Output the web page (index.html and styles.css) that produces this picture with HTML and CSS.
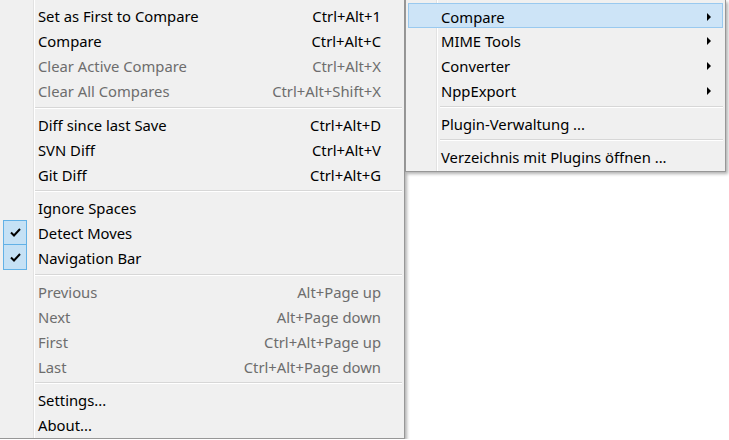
FILE: index.html
```html
<!DOCTYPE html>
<html lang="en">
<head>
  <meta charset="UTF-8">
  <title>Compare menu</title>
  <link rel="stylesheet" href="styles.css">
</head>
<body>
  <div class="menus">
    <div class="menu main-menu">
      <div class="item"><span class="gutter"></span><span class="label">Set as First to Compare</span><span class="key">Ctrl+Alt+1</span></div>
      <div class="item"><span class="gutter"></span><span class="label">Compare</span><span class="key">Ctrl+Alt+C</span></div>
      <div class="item disabled"><span class="gutter"></span><span class="label">Clear Active Compare</span><span class="key">Ctrl+Alt+X</span></div>
      <div class="item disabled"><span class="gutter"></span><span class="label">Clear All Compares</span><span class="key">Ctrl+Alt+Shift+X</span></div>
      <div class="sep wide"></div>
      <div class="item"><span class="gutter"></span><span class="label">Diff since last Save</span><span class="key">Ctrl+Alt+D</span></div>
      <div class="item"><span class="gutter"></span><span class="label">SVN Diff</span><span class="key">Ctrl+Alt+V</span></div>
      <div class="item"><span class="gutter"></span><span class="label">Git Diff</span><span class="key">Ctrl+Alt+G</span></div>
      <div class="sep"></div>
      <div class="item"><span class="gutter"></span><span class="label">Ignore Spaces</span></div>
      <div class="item checked">
        <span class="gutter"><span class="check"><svg width="11" height="9" viewBox="0 0 11 9"><path d="M1 4.5 L4 7.5 L10 1" fill="none" stroke="#000" stroke-width="2"/></svg></span></span>
        <span class="label">Detect Moves</span>
      </div>
      <div class="item checked">
        <span class="gutter"><span class="check"><svg width="11" height="9" viewBox="0 0 11 9"><path d="M1 4.5 L4 7.5 L10 1" fill="none" stroke="#000" stroke-width="2"/></svg></span></span>
        <span class="label">Navigation Bar</span>
      </div>
      <div class="sep wide"></div>
      <div class="item disabled"><span class="gutter"></span><span class="label">Previous</span><span class="key">Alt+Page up</span></div>
      <div class="item disabled"><span class="gutter"></span><span class="label">Next</span><span class="key">Alt+Page down</span></div>
      <div class="item disabled"><span class="gutter"></span><span class="label">First</span><span class="key">Ctrl+Alt+Page up</span></div>
      <div class="item disabled"><span class="gutter"></span><span class="label">Last</span><span class="key">Ctrl+Alt+Page down</span></div>
      <div class="sep"></div>
      <div class="item"><span class="gutter"></span><span class="label">Settings...</span></div>
      <div class="item"><span class="gutter"></span><span class="label">About...</span></div>
    </div>

    <div class="menu sub-menu">
      <div class="item active"><span class="gutter"></span><span class="label">Compare</span><span class="arrow"></span></div>
      <div class="item"><span class="gutter"></span><span class="label">MIME Tools</span><span class="arrow"></span></div>
      <div class="item"><span class="gutter"></span><span class="label">Converter</span><span class="arrow"></span></div>
      <div class="item"><span class="gutter"></span><span class="label">NppExport</span><span class="arrow"></span></div>
      <div class="sep"></div>
      <div class="item"><span class="gutter"></span><span class="label">Plugin-Verwaltung ...</span></div>
      <div class="sep"></div>
      <div class="item"><span class="gutter"></span><span class="label">Verzeichnis mit Plugins öffnen ...</span></div>
    </div>
  </div>
</body>
</html>
```

FILE: styles.css
```css
body {
  margin: 0;
  background: #fff;
  font-family: "Noto Sans", "Open Sans", sans-serif;
  font-size: 14.8px;
  color: #000;
}

.menus {
  display: flex;
  align-items: flex-start;
}

.menu {
  background-color: #f0f0f0;
  box-sizing: border-box;
}

.main-menu {
  width: 405px;
  height: 439px;
  padding: 3px 2px 0 0;
  border-right: 1px solid #979797;
  border-bottom: 1px solid #979797;
  box-shadow: 2px 2px 3px rgba(0, 0, 0, 0.3);
  background-image: linear-gradient(to right, transparent 33px, #e2e2e2 33px, #e2e2e2 34px, #fff 34px, #fff 35px, transparent 35px);
}

.sub-menu {
  width: 321px;
  padding: 3px 2px 2px;
  border: 1px solid #979797;
  border-top: none;
  box-shadow: 2px 2px 3px rgba(0, 0, 0, 0.3);
  background-image: linear-gradient(to right, transparent 30px, #e2e2e2 30px, #e2e2e2 31px, #fff 31px, #fff 32px, transparent 32px);
}

.item {
  display: flex;
  align-items: center;
  height: 25px;
  box-sizing: border-box;
  white-space: nowrap;
}

.sub-menu .item {
  padding-top: 1px;
}

.main-menu .item {
  padding-right: 21px;
}

.gutter {
  display: flex;
  align-items: center;
  justify-content: center;
  width: 38px;
  height: 100%;
  flex-shrink: 0;
}

.main-menu .gutter {
  justify-content: flex-start;
  padding-left: 3px;
  box-sizing: border-box;
}

.sub-menu .gutter {
  width: 33px;
}

.label {
  flex: 1;
}

.key {
  text-align: right;
}

.disabled {
  color: #6d6d6d;
}

.check {
  display: flex;
  align-items: center;
  justify-content: center;
  width: 24px;
  height: 25px;
  box-sizing: border-box;
  background-color: #c5e1f5;
  border: 1px solid #62b1e6;
}

.checked + .checked .check {
  border-top: none;
}

.sub-menu .active {
  background-color: #cde4f7;
  border: 1px solid #99c9ef;
  padding-top: 2px;
}

.active .gutter {
  width: 32px;
}

.arrow {
  width: 0;
  height: 0;
  margin-right: 12px;
  border-top: 4px solid transparent;
  border-bottom: 4px solid transparent;
  border-left: 4px solid #000;
}

.active .arrow {
  margin-right: 11px;
}

.sep {
  height: 8px;
  display: flex;
  align-items: center;
  margin-left: 35px;
}

.sep.wide {
  height: 9px;
}

.sep::before {
  content: "";
  flex: 1;
  border-top: 1px solid #d7d7d7;
  border-bottom: 1px solid #fff;
}

.sub-menu .sep {
  margin-left: 32px;
}
```
